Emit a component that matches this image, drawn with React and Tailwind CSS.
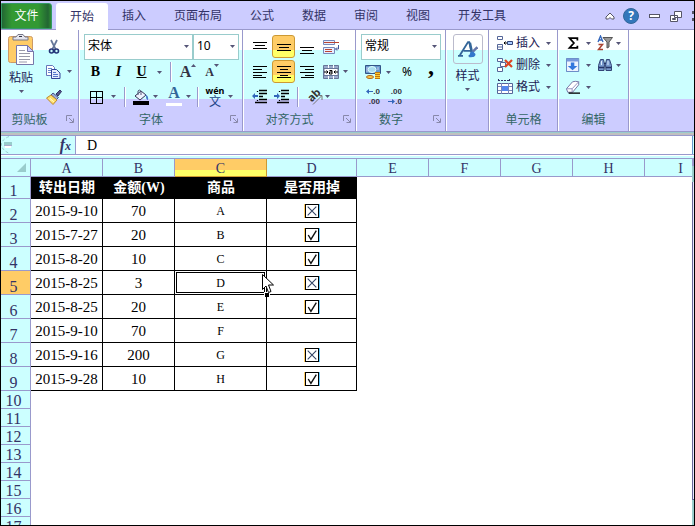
import { useState } from 'react';

const tabs = ['开始', '插入', '页面布局', '公式', '数据', '审阅', '视图', '开发工具'];
const columns = ['A', 'B', 'C', 'D', 'E', 'F', 'G', 'H', 'I'];

const records = [
  { date: '2015-9-10', amount: '70', product: 'A', used: 'no' },
  { date: '2015-7-27', amount: '20', product: 'B', used: 'yes' },
  { date: '2015-8-20', amount: '10', product: 'C', used: 'yes' },
  { date: '2015-8-25', amount: '3', product: 'D', used: 'no' },
  { date: '2015-8-25', amount: '20', product: 'E', used: 'yes' },
  { date: '2015-9-10', amount: '70', product: 'F', used: null },
  { date: '2015-9-16', amount: '200', product: 'G', used: 'no' },
  { date: '2015-9-28', amount: '10', product: 'H', used: 'yes' },
];
const emptyRows = [10, 11, 12, 13, 14, 15, 16, 17];

function Icon({ children, className = 'size-4' }) {
  return (
    <svg viewBox="0 0 16 16" className={`shrink-0 ${className}`} fill="none" aria-hidden="true">
      {children}
    </svg>
  );
}

function Arrow({ className = '' }) {
  return (
    <svg viewBox="0 0 5 3" className={`h-[3px] w-[5px] shrink-0 ${className}`} aria-hidden="true">
      <path d="M0 0h5L2.5 3z" fill="#555577" />
    </svg>
  );
}

function Separator() {
  return <span className="h-5 w-[2px] shrink-0 border-l border-[#9999cc] bg-white" />;
}

function Tool({ label, children, className = '' }) {
  return (
    <button type="button" aria-label={label} className={`flex shrink-0 items-center justify-center ${className}`}>
      {children}
    </button>
  );
}

function Group({ title, launcher, className = '', children }) {
  return (
    <section className={`flex shrink-0 flex-col border-r border-white ${className}`}>
      <div className="flex flex-1 flex-col border-r border-[#9999cc]">
        <div className="h-[79px] pt-1">{children}</div>
        <div className={`relative flex h-[22px] items-center justify-center text-[#336666] ${launcher ? 'pr-5' : ''}`}>
          {title}
          {launcher && (
            <button type="button" aria-label={title + '设置'} className="absolute right-1 top-[6px]">
              <svg viewBox="0 0 8 8" className="size-2" fill="none" stroke="#8888aa">
                <path d="M.5 6V.5H6M3 3l4 4M7.5 3.5v4h-4" />
              </svg>
            </button>
          )}
        </div>
      </div>
    </section>
  );
}

function Combo({ label, value, className }) {
  return (
    <div className={`relative h-[26px] shrink-0 ${className}`}>
      <select
        aria-label={label}
        defaultValue={value}
        className="h-full w-full appearance-none border border-[#99cccc] bg-white pb-[2px] pl-[3px] text-xs text-black outline-none"
      >
        <option>{value}</option>
      </select>
      <Arrow className="pointer-events-none absolute right-[4px] top-[11px]" />
    </div>
  );
}

function Lines({ d }) {
  return (
    <Icon>
      <path d={d} stroke="#000" shapeRendering="crispEdges" />
    </Icon>
  );
}

function Paste() {
  return (
    <svg viewBox="0 0 27 32" className="h-8 w-[27px]" fill="none" aria-hidden="true">
      <rect x=".5" y="2.5" width="24" height="26" rx="2" fill="#ffcc66" stroke="#cc9966" />
      <path d="M5 6V3h3l2-2.5h5L17 3h3v3z" fill="#e4e4ec" stroke="#777788" />
      <path d="M11 2.5h3" stroke="#333344" />
      <path d="M8.5 11.5h11l6 6v13h-17z" fill="#fff" stroke="#7777aa" />
      <path d="M19.5 11.5v6h6z" fill="#ccccff" stroke="#7777aa" />
      <path d="M11 16.5h6M11 19.5h11M11 22.5h11M11 25.5h11M11 28h8" stroke="#9999aa" />
    </svg>
  );
}

function Scissors() {
  return (
    <Icon>
      <path d="M5 1l4.500 9M11 1L6.500 10" stroke="#667799" strokeWidth="1.700" />
      <circle cx="5.500" cy="12" r="2" stroke="#223377" strokeWidth="1.600" />
      <circle cx="10.500" cy="12" r="2" stroke="#223377" strokeWidth="1.600" />
    </Icon>
  );
}

function Copy() {
  return (
    <Icon>
      <path d="M1.500 1.500h6l2 2v8h-8z" fill="#fff" stroke="#6677bb" />
      <path d="M3 4.500h4M3 6.500h4M3 8.500h3" stroke="#6688cc" />
      <path d="M6.500 5.500h5l3.500 3.500v5.500h-8.500z" fill="#e6eeff" stroke="#334499" />
      <path d="M8 8.500h3M8 10.500h5M8 12.500h5" stroke="#5577cc" />
    </Icon>
  );
}

function Brush() {
  return (
    <Icon>
      <path d="M10 5l4-4 1.500 1.500L12 7z" fill="#555588" stroke="#333366" />
      <path d="M7 4l5.500 4.500-2 2L5 6z" fill="#99aadd" stroke="#445588" />
      <path d="M5 6l6 5-4 4.500L.5 9z" fill="#ffdd66" stroke="#bb8833" />
      <path d="M4 9l4 4M3 9.500l3 3" stroke="#fff6bb" />
    </Icon>
  );
}

function Ribbon() {
  return (
    <div className="flex h-[102px] shrink-0 overflow-hidden border-b border-[#9999cc] bg-[linear-gradient(#ffffff_20px,#ccffff_20px,#ccffff_69px,#ccccff_69px)] text-xs text-[#222255]">
      <Group title="剪贴板" launcher className="w-[79px]">
        <div className="flex">
          <button type="button" className="flex h-[75px] w-10 flex-col items-center">
            <Paste />
            <span className="mt-1">粘贴</span>
            <Arrow className="mt-1" />
          </button>
          <div className="flex flex-col pl-1">
            <Tool label="剪切" className="h-[25px] w-[17px]"><Scissors /></Tool>
            <Tool label="复制" className="h-[25px] gap-[6px]"><Copy /><Arrow /></Tool>
            <Tool label="格式刷" className="h-[25px] w-[18px]"><Brush /></Tool>
          </div>
        </div>
      </Group>

      <Group title="字体" launcher className="w-[164px]">
        <div className="flex pl-1">
          <Combo label="字体名称" value="宋体" className="w-[109px]" />
          <Combo label="字号" value="10" className="w-[46px]" />
        </div>
        <div className="flex h-6 items-center pl-1 font-['Liberation_Serif',serif] text-sm font-bold text-black">
          <Tool label="加粗" className="w-[23px]">B</Tool>
          <Tool label="倾斜" className="w-[23px] italic">I</Tool>
          <Tool label="下划线" className="w-[23px] underline">U</Tool>
          <Arrow className="ml-1 mr-2" />
          <Separator />
          <Tool label="增大字号" className="ml-2 w-4 items-start text-base text-[#333344]">
            A<Arrow className="mt-1 rotate-180" />
          </Tool>
          <Tool label="减小字号" className="ml-2 w-4 items-start text-[#333344]">
            <span className="text-xs leading-6">A</span><Arrow className="mt-1" />
          </Tool>
        </div>
        <div className="flex h-[25px] items-center pl-[9px]">
          <Tool label="边框" className="gap-[6px]">
            <Lines d="M1.500 2.500h12v12h-12zM7.500 2v12M1 8.500h13" /><Arrow />
          </Tool>
          <span className="w-2" />
          <Separator />
          <Tool label="填充颜色" className="ml-[7px] gap-1">
            <Icon>
              <path d="M2 7l6-5 5 4-6 5z" fill="#eef2ff" stroke="#333355" />
              <path d="M5 6V2q1-2 3 0v4" stroke="#555577" />
              <path d="M12 5q4 2 3 6-2 0-2-4z" fill="#4477cc" />
              <path d="M0 12h16v4H0z" fill="#000" />
            </Icon>
            <Arrow />
          </Tool>
          <Tool label="字体颜色" className="ml-2 gap-1">
            <span className="flex flex-col items-center font-['Liberation_Serif',serif] text-base leading-3 font-bold text-[#336699]">
              A<span className="mt-1 h-[3px] w-4 bg-white" />
            </span>
            <Arrow />
          </Tool>
          <span className="w-[6px]" />
          <Separator />
          <Tool label="拼音" className="ml-[7px] gap-1">
            <span className="flex w-[18px] flex-col items-center text-[9px] leading-[10px] font-bold text-black">
              wén<span className="text-xs leading-3 font-normal text-[#224488]">文</span>
            </span>
            <Arrow />
          </Tool>
        </div>
      </Group>

      <Group title="对齐方式" launcher className="w-[113px]">
        <div className="flex h-[25px] items-center pl-1">
          <Tool label="顶端对齐" className="w-6"><Lines d="M1 3.500h14M3 6.500h10M1 9.500h14" /></Tool>
          <Tool label="垂直居中" className="h-[23px] w-[23px] rounded-[3px] border border-[#cc9933] bg-[linear-gradient(#ffcc66_65%,#ffff66_65%)]">
            <Lines d="M1 5.500h14M3 8.500h10M1 11.500h14" />
          </Tool>
          <Tool label="底端对齐" className="w-6"><Lines d="M1 8.500h14M3 11.500h10M1 14.500h14" /></Tool>
          <Tool label="自动换行" className="ml-1">
            <Icon>
              <path d="M.5 1.500h11v4H.5zM.5 8.500h11v6H.5z" fill="#e8eeff" stroke="#7788bb" />
              <path d="M1 3.500h15" stroke="#bb4433" />
              <path d="M2 10.500h7M2 12.500h7" stroke="#bb4433" />
              <path d="M15.500 6v4h-3M14 8.500L12.500 10l1.500 1.500" stroke="#445599" />
            </Icon>
          </Tool>
        </div>
        <div className="flex h-[25px] items-center pl-1">
          <Tool label="左对齐" className="w-6"><Lines d="M1 2.500h14M1 5.500h9M1 8.500h14M1 11.500h9M1 13.500h13" /></Tool>
          <Tool label="居中" className="h-[23px] w-[23px] rounded-[3px] border border-[#cc9933] bg-[linear-gradient(#ffcc66_65%,#ffff66_65%)]">
            <Lines d="M1 2.500h14M4 5.500h8M1 8.500h14M4 11.500h8M1 13.500h14" />
          </Tool>
          <Tool label="右对齐" className="w-6"><Lines d="M1 2.500h14M6 5.500h9M1 8.500h14M6 11.500h9M2 13.500h13" /></Tool>
          <Tool label="合并后居中" className="ml-1 gap-1">
            <Icon>
              <path d="M.5 1.500h15v13H.5z" fill="#99aacc" stroke="#667799" />
              <path d="M5.500 1v3M10.500 1v3M5.500 12v3M10.500 12v3" stroke="#fff" />
              <path d="M1 4.500h14v7H1z" fill="#fff" stroke="#667799" />
              <path d="M1 8h4M11 8h4M3.500 6.500L5 8 3.500 9.500M12.500 6.500L11 8l1.500 1.500" stroke="#000" />
              <path d="M6.500 6.500h2.500v3.500h-2.500V8H9" stroke="#000" />
            </Icon>
            <Arrow />
          </Tool>
        </div>
        <div className="flex h-[25px] items-center pl-2">
          <Tool label="减少缩进量">
            <Icon>
              <path d="M7 1.500h8M7 4.500h8M7 7.500h4M7 10.500h8M3 13.500h12M5.500 2v1M5.500 11v1" stroke="#000" strokeWidth="1.300" />
              <path d="M0 7l3-3v2h3v2H3v2z" fill="#3366bb" />
            </Icon>
          </Tool>
          <Tool label="增加缩进量" className="ml-[6px]">
            <Icon>
              <path d="M7 1.500h8M7 4.500h8M7 7.500h4M7 10.500h8M3 13.500h12M5.500 2v1M5.500 11v1" stroke="#000" strokeWidth="1.300" />
              <path d="M6 7L3 4v2H0v2h3v2z" fill="#3366bb" />
            </Icon>
          </Tool>
          <span className="w-[7px]" />
          <Separator />
          <Tool label="方向" className="ml-2 gap-[2px]">
            <span className="relative size-4">
              <span className="absolute left-0 top-0 -rotate-45 text-[11px] leading-3 font-bold text-[#333333]">ab</span>
              <Icon className="absolute inset-0 size-4">
                <path d="M6 15.500l8.500-8.500M15 11V6.500h-4.500" stroke="#777" />
              </Icon>
            </span>
            <Arrow />
          </Tool>
        </div>
      </Group>

      <Group title="数字" launcher className="w-[90px]">
        <div className="flex pl-1"><Combo label="数字格式" value="常规" className="w-20" /></div>
        <div className="flex h-6 items-center pl-2 text-black">
          <Tool label="会计数字格式" className="gap-[5px]">
            <Icon>
              <path d="M.5 1.500h15v8H.5z" fill="#6699cc" stroke="#335588" />
              <ellipse cx="7" cy="5.500" rx="4" ry="3" fill="#aaddee" stroke="#dff" />
              <path d="M2 3v5M13 3v3" stroke="#cce" />
              <path d="M10 8h5v7h-5z" fill="#ffcc33" />
              <path d="M10 8.500h5M10 10.500h5M10 12.500h5M10 14.500h5" stroke="#bb7711" />
              <ellipse cx="5" cy="13" rx="3.500" ry="1.500" fill="#ffcc44" stroke="#aa6622" />
            </Icon>
            <Arrow />
          </Tool>
          <Tool label="百分比样式" className="ml-2 w-4 text-xs">%</Tool>
          <Tool label="千位分隔样式" className="ml-3 w-2 font-['Liberation_Serif',serif] text-2xl leading-3 font-bold">
            <span className="pb-3">,</span>
          </Tool>
        </div>
        <div className="flex h-[25px] items-center gap-[6px] pl-2 font-['Liberation_Sans',sans-serif] text-[8px] leading-[10px] font-bold text-[#333344]">
          <Tool label="增加小数位数" className="w-4">
            <span className="flex flex-col items-end">
              <span className="flex items-center"><svg viewBox="0 0 7 5" className="h-[5px] w-[7px]"><path d="M0 2.500L3 0v2h4v1H3v2z" fill="#3366bb" /></svg>.0</span>
              <span>.00</span>
            </span>
          </Tool>
          <Tool label="减少小数位数" className="w-4">
            <span className="flex flex-col items-end">
              <span>.00</span>
              <span className="flex items-center"><svg viewBox="0 0 7 5" className="h-[5px] w-[7px]"><path d="M7 2.500L4 0v2H0v1h4v2z" fill="#3366bb" /></svg>.0</span>
            </span>
          </Tool>
        </div>
      </Group>

      <Group title="" className="w-[43px]">
        <button type="button" className="flex w-full flex-col items-center">
          <span className="flex h-[30px] w-[30px] items-center justify-center rounded-[3px] border border-[#bbbbcc]">
            <Icon className="size-5">
              <path d="M1.500 13L8 2.500h1l2.500 10.500M4.500 9.500h6M0 13.500h4M8.500 13.500h4" stroke="#336699" strokeWidth="1.500" />
              <path d="M9.500 3l2 9.500" stroke="#336699" strokeWidth="2" />
              <path d="M15.500 6.500l-4 4" stroke="#6677aa" strokeWidth="2" />
              <path d="M9 14.500q0-4.500 3-4.500l2 2q0 3-5 2.500z" fill="#3377cc" />
            </Icon>
          </span>
          <span className="mt-1">样式</span>
          <Arrow className="mt-1" />
        </button>
      </Group>

      <Group title="单元格" className="w-[69px]">
        <div className="-mt-[2px] pl-[7px] [&>button]:h-[22px]">
          <Tool label="插入" className="gap-[3px]">
            <Icon>
              <path d="M.5 1.500h5v3h-5zM.5 9.500h5v5h-5zM.5 12h5" fill="#fff" stroke="#556699" />
              <path d="M10.500 6.500h5v3h-5z" fill="#aaccff" stroke="#334477" />
              <path d="M10 8H7M8.500 6.500L7 8l1.500 1.500" stroke="#000" />
            </Icon>
            插入<Arrow className="ml-[3px]" />
          </Tool>
          <Tool label="删除" className="gap-[3px]">
            <Icon>
              <path d="M.5 1.500h5v3h-5zM.5 10.500h5v4h-5zM3.500 5.500h5v4h-5z" fill="#fff" stroke="#556699" />
              <path d="M8 3l7 7M15 3l-7 7" stroke="#dd4422" strokeWidth="2.200" />
            </Icon>
            删除<Arrow className="ml-[3px]" />
          </Tool>
          <Tool label="格式" className="gap-[3px]">
            <Icon>
              <path d="M1 1.500h12M1.500 0v3M12.500 0v3" stroke="#333366" strokeDasharray="2 1" />
              <path d="M.5 4.500h15v10H.5z" fill="#fff" stroke="#556699" />
              <path d="M1 7.500h14M1 11.500h14M4.500 4v11M11.500 4v11" stroke="#7788bb" />
              <path d="M5 7h6v5H5z" fill="#5588ee" />
            </Icon>
            格式<Arrow className="ml-[3px]" />
          </Tool>
        </div>
      </Group>

      <Group title="编辑" className="w-[71px]">
        <div className="-mt-[2px] grid grid-cols-[31px_31px] pl-[7px] [&>button]:h-[22px] [&>button]:justify-start">
          <Tool label="自动求和" className="gap-[6px]">
            <Icon className="size-[14px]">
              <path d="M13 5V2.500H4L9 8l-5 5.500h9V11" stroke="#000" strokeWidth="2" />
            </Icon>
            <Arrow />
          </Tool>
          <Tool label="排序和筛选" className="gap-[3px]">
            <Icon>
              <path d="M1 7l2.500-6L6 7M2 5h3" stroke="#3366bb" strokeWidth="1.300" />
              <path d="M1.500 9.500h4l-4 5h4.500" stroke="#aa4433" strokeWidth="1.500" />
              <path d="M6 2.500h9.500L12 7v5l-2 1V7z" fill="#999" stroke="#555" />
            </Icon>
            <Arrow />
          </Tool>
          <Tool label="填充" className="gap-[6px]">
            <Icon className="size-[14px]">
              <path d="M.5.500h14v15H.5z" fill="#eef4ff" stroke="#5577bb" />
              <path d="M1 2.500h13" stroke="#7799dd" strokeWidth="3" />
              <path d="M5.500 5h4v4H13l-5.500 5L2 9h3.500z" fill="#3377dd" />
            </Icon>
            <Arrow />
          </Tool>
          <Tool label="查找和选择" className="gap-[3px]">
            <Icon>
              <path d="M3.500 2.500h3l1 5-.5 6H1.500v-5zM9.500 2.500h3l2 6v5H9l-.5-6z" fill="#7799cc" stroke="#334477" />
              <path d="M7 6.500h2M2 10.500h5M9 10.500h5" stroke="#223366" strokeWidth="1.500" />
              <path d="M4.500 4v4M11 4v4" stroke="#ddeeff" />
            </Icon>
            <Arrow />
          </Tool>
          <Tool label="清除" className="gap-[6px]">
            <Icon className="size-[14px]">
              <path d="M.5 10l7-8q3-1 7 0v3.500l-7 8.500H2z" fill="#fff" stroke="#666699" />
              <path d="M.5 10h6.500l7.500-8M7 10v4" stroke="#8888bb" />
              <path d="M3 15h13" stroke="#000" strokeWidth="1.500" />
            </Icon>
            <Arrow />
          </Tool>
        </div>
      </Group>
    </div>
  );
}

function UsedBox({ used, label }) {
  return (
    <span className="relative mx-auto block size-[14px]">
      <input
        type="checkbox"
        aria-label={label}
        defaultChecked={used === 'yes'}
        className="block size-[14px] appearance-none border border-black bg-white shadow-[-1px_0_#ffcc66,1px_0_#66ccff]"
      />
      <svg viewBox="0 0 13 13" className="pointer-events-none absolute inset-0 size-[14px]" fill="none">
        {used === 'yes' ? (
          <path d="M3 6.500l2.500 4L10.500 2.500" stroke="#111" strokeWidth="1.300" />
        ) : (
          <path d="M2.500 2.500l8 8M10.500 2.500l-8 8" stroke="#334466" />
        )}
      </svg>
    </span>
  );
}

function RowHeader({ n, active }) {
  return (
    <th
      scope="row"
      className={`border-r border-b border-[#9999cc] p-0 pr-1 align-bottom font-['Liberation_Serif',serif] text-base leading-[15px] font-normal text-[#333366] ${active ? 'bg-[#ffcc66]' : 'bg-[#ccffff]'}`}
    >
      {n}
    </th>
  );
}

function Sheet() {
  const cell = "border-r border-b border-black p-0 text-center font-['Liberation_Serif',serif] leading-5";
  return (
    <div className="relative min-w-0 flex-1 overflow-hidden bg-white">
      <table className="w-[716px] table-fixed border-separate border-spacing-0 text-black">
        <colgroup>
          <col className="w-[30px]" />
          <col className="w-[72px]" />
          <col className="w-[72px]" />
          <col className="w-[92px]" />
          <col className="w-[90px]" />
          <col className="w-[72px]" />
          <col className="w-[72px]" />
          <col className="w-[72px]" />
          <col className="w-[72px]" />
          <col className="w-[72px]" />
        </colgroup>
        <thead>
          <tr className="h-[18px]">
            <td className="border-r border-b border-[#9999cc] bg-[#ccffff] p-0">
              <svg viewBox="0 0 9 9" className="ml-4 size-[9px]"><path d="M9 0v9H0z" fill="#99cccc" /></svg>
            </td>
            {columns.map((c) => (
              <th
                key={c}
                scope="col"
                className={`border-r border-b p-0 pt-[2px] font-['Liberation_Serif',serif] text-sm leading-[15px] font-normal text-[#333366] ${c === 'C' ? 'border-[#cc9933] bg-[linear-gradient(#ffcc66_11px,#ffff66_11px)]' : 'border-[#9999cc] bg-[#ccffff]'}`}
              >
                {c}
              </th>
            ))}
          </tr>
        </thead>
        <tbody>
          <tr className="h-[22px]">
            <RowHeader n={1} />
            {['转出日期', '金额(W)', '商品', '是否用掉'].map((t) => (
              <td key={t} className="border-b border-black bg-black p-0 text-center font-['Liberation_Serif','Noto_Sans_CJK_SC',serif] text-sm leading-5 font-bold text-white">
                {t}
              </td>
            ))}
            <td colSpan={5} />
          </tr>
          {records.map((r, i) => (
            <tr key={r.product} className="h-6">
              <RowHeader n={i + 2} active={r.product === 'D'} />
              <td className={`${cell} text-[15px]`}>{r.date}</td>
              <td className={`${cell} text-[15px]`}>{r.amount}</td>
              <td className={`${cell} relative text-xs`}>
                {r.product}
                {r.product === 'D' && (
                  <>
                    <span className="absolute inset-px border border-black" />
                    <span className="absolute -right-1 -bottom-1 size-[6px] border border-white bg-black" />
                  </>
                )}
              </td>
              <td className={cell}>{r.used && <UsedBox used={r.used} label={r.product + ' 是否用掉'} />}</td>
              <td colSpan={5} />
            </tr>
          ))}
          {emptyRows.map((n) => (
            <tr key={n} className="h-[18px]">
              <RowHeader n={n} />
              <td colSpan={9} />
            </tr>
          ))}
        </tbody>
      </table>
      <svg viewBox="0 0 12 20" className="absolute left-[261px] top-[115px] h-5 w-3" aria-hidden="true">
        <path d="M.5.500v15l3.500-3.500 2.500 6.500 2.500-1L6.500 11h5z" fill="#fff" stroke="#000" />
      </svg>
    </div>
  );
}

export default function App() {
  const [formula, setFormula] = useState('D');
  const [activeTab, setActiveTab] = useState('开始');

  return (
    <div className="flex h-screen flex-col overflow-hidden border border-black bg-white font-['Noto_Sans','Noto_Sans_CJK_SC',sans-serif]">
      <header className="flex h-[29px] shrink-0 items-stretch border-b border-[#9999cc] bg-[#ccccff] pt-[2px] text-xs text-[#333366]">
        <button type="button" className="mr-1 w-[51px] shrink-0 rounded-tr-[3px] border border-[#339966] bg-[linear-gradient(90deg,#226633_0,#339933_10px,#339933_36px,#226633_46px,#339933_50px)] text-white">
          文件
        </button>
        <nav className="flex">
          {tabs.map((t) => (
            <button
              key={t}
              type="button"
              onClick={() => setActiveTab(t)}
              className={`shrink-0 px-[14px] ${t === activeTab ? '-mb-px rounded-t-[3px] bg-white' : ''}`}
            >
              {t}
            </button>
          ))}
        </nav>
        <div className="ml-auto flex shrink-0 items-center gap-2">
          <Tool label="折叠功能区">
            <svg viewBox="0 0 10 8" className="h-2 w-[10px]"><path d="M1 5l4-4 4 4v2H6.500L5 5.500 3.500 7H1z" fill="#fff" stroke="#555566" /></svg>
          </Tool>
          <Tool label="帮助" className="size-4 rounded-full border border-[#336699] bg-[#3377bb] text-xs font-bold text-white">?</Tool>
          <Tool label="最小化" className="mx-[2px] h-1 w-[11px] border border-[#555566] bg-white" />
          <Tool label="还原">
            <svg viewBox="0 0 12 11" className="h-[11px] w-3" fill="#fff" stroke="#555566">
              <path d="M4.500.500h7v6h-7zM.5 4.500h7v6h-7z" />
              <path d="M2.500 7.500h3v1h-3z" />
            </svg>
          </Tool>
          <Tool label="关闭" className="pl-[2px]">
            <svg viewBox="0 0 2 10" className="h-[10px] w-[2px]" fill="#555566">
              <path d="M0 0h2v3H0zM0 7h2v3H0z" />
            </svg>
          </Tool>
        </div>
      </header>

      <Ribbon />

      <div className="h-1 shrink-0 border-t border-b border-t-[#99cccc] border-b-[#9999cc] bg-[#c0c0c0]" />
      <div className="flex h-[19px] shrink-0 border-b border-[#9999cc]">
        <div className="flex w-[75px] shrink-0 items-center justify-between border-r border-[#9999cc] bg-[#ccffff] pr-1">
          <svg viewBox="0 0 12 18" className="h-[18px] w-3" fill="none" aria-hidden="true">
            <path d="M8 .5Q0 4 .5 9t8 8.500" stroke="#99cccc" strokeDasharray="3 2" />
            <path d="M3 6h8v3H3z" fill="#99cccc" />
            <path d="M3 9.500h8" stroke="#aaaacc" />
            <path d="M4 11h6" stroke="#fff" strokeWidth="2" />
          </svg>
          <button type="button" aria-label="插入函数" className="font-['Liberation_Serif',serif] text-base leading-4 font-bold text-[#333366] italic">
            f<span className="text-xs">x</span>
          </button>
        </div>
        <input
          aria-label="编辑栏"
          value={formula}
          onChange={(e) => setFormula(e.target.value)}
          className="min-w-0 flex-1 px-[11px] pt-px font-['Liberation_Serif',serif] text-sm text-black outline-none"
        />
        <div className="w-[2px] shrink-0 border-l border-[#6699cc] bg-[#ccffff]" />
      </div>
      <div className="h-1 shrink-0 border-b border-[#9999cc] bg-[linear-gradient(#ffffff_1px,#ccffff_1px)]" />

      <main className="flex min-h-0 flex-1">
        <Sheet />
        <div className="flex w-[2px] shrink-0 flex-col">
          <div className="h-[7px] bg-[#9999cc]" />
          <div className="h-4 bg-[#99cccc]" />
          <div className="flex-1 border-l border-[#666699] bg-[#e6e6ff]" />
          <div className="h-[26px] border-t border-[#666699] bg-[#99cccc]" />
        </div>
      </main>
    </div>
  );
}
